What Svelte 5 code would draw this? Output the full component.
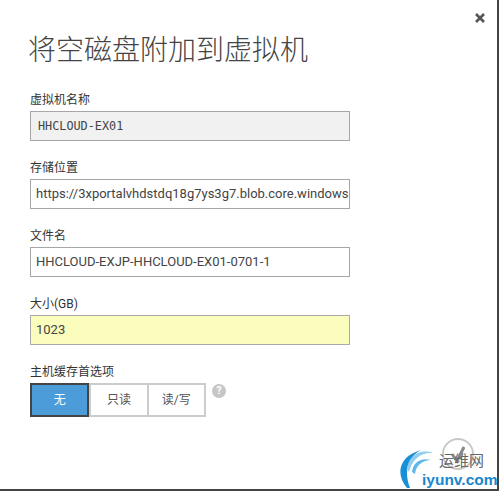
<script>
	const fields = [
		{ label: '虚拟机名称', value: 'HHCLOUD-EX01', kind: 'readonly' },
		{ label: '存储位置', value: 'https://3xportalvhdstdq18g7ys3g7.blob.core.windows', kind: '' },
		{ label: '文件名', value: 'HHCLOUD-EXJP-HHCLOUD-EX01-0701-1', kind: '' },
		{ label: '大小(GB)', value: '1023', kind: 'invalid' }
	];
	const options = ['无', '只读', '读/写'];
	let selected = 0;
</script>

<div class="dialog">
	<button class="close" aria-label="close">
		<svg width="10" height="10" viewBox="0 0 10 10"><path d="M1 1L9 9M9 1L1 9" stroke="#555" stroke-width="2.6" /></svg>
	</button>

	<h1>将空磁盘附加到虚拟机</h1>

	{#each fields as field}
		<div class="field">
			<span class="label">{field.label}</span>
			<div class="input {field.kind}">{field.value}</div>
		</div>
	{/each}

	<div class="field">
		<span class="label">主机缓存首选项</span>
		<div class="option-row">
			<div class="options">
				{#each options as option, i}
					<div class="option" class:selected={i === selected}>{option}</div>
				{/each}
			</div>
			<span class="help">?</span>
		</div>
	</div>

	<div class="confirm">
		<svg width="32" height="32" viewBox="0 0 32 32">
			<circle cx="16" cy="16" r="15" fill="none" stroke="#c8c8c8" stroke-width="2" />
			<path d="M10 16L15 23L22 9" fill="none" stroke="#888" stroke-width="3" />
		</svg>
	</div>

	<div class="watermark">
		<svg viewBox="0 0 34 40">
			<path d="M8 40C-4 26 0 8 22 2C10 8 4 22 11 40Z" fill="#1a8fd8" />
			<path d="M13 24C14 14 22 9 32 12C24 12 17 17 16 26Z" fill="#5cb8ea" />
			<path d="M8 20C10 9 20 0 34 5C22 4 13 11 10 24Z" fill="#8ccdf0" />
		</svg>
		<span class="wm-cn">运维网</span>
		<span class="wm-en">iyunv.com</span>
	</div>
</div>

<style>
	:global(body) {
		margin: 0;
		background: #fff;
	}

	.dialog {
		position: relative;
		box-sizing: border-box;
		width: 499px;
		height: 491px;
		padding: 32px 0 0 30px;
		background: #fff;
		border-right: 2px solid #444;
		border-bottom: 2px solid #444;
		font-family: "Roboto", "Noto Sans CJK SC", sans-serif;
		color: #333;
	}

	.close {
		position: absolute;
		top: 13px;
		right: 12px;
		padding: 0;
		border: 0;
		background: none;
		line-height: 0;
	}

	h1 {
		margin: 0 0 24px -2px;
		font-family: "Noto Sans CJK SC", sans-serif;
		font-size: 28px;
		font-weight: 300;
		line-height: 33px;
		color: #444;
	}

	.field {
		margin-bottom: 16px;
	}

	.label {
		display: block;
		height: 22px;
		font-size: 12px;
		line-height: 22px;
	}

	.input {
		box-sizing: border-box;
		width: 320px;
		height: 30px;
		padding: 0 5px;
		overflow: hidden;
		border: 1px solid #a6a6a6;
		font-size: 13px;
		line-height: 28px;
		white-space: nowrap;
		color: #444;
	}

	.readonly {
		padding-left: 7px;
		background: #f1f1f1;
		font-family: "DejaVu Sans Mono", monospace;
		font-size: 11.8px;
	}

	.invalid {
		background: #fbfdbc;
		border-color: #aaa;
	}

	.option-row {
		display: flex;
		align-items: flex-start;
		gap: 6px;
	}

	.options {
		display: flex;
		height: 34px;
		border: 2px solid #ccc;
		box-sizing: border-box;
		width: 176px;
	}

	.option {
		flex: 1;
		box-sizing: border-box;
		font-size: 12px;
		line-height: 30px;
		text-align: center;
		color: #555;
		border-left: 2px solid #ccc;
	}

	.option:first-child {
		border-left: 0;
	}

	.option.selected {
		margin: -2px 0 -2px -2px;
		height: 34px;
		line-height: 30px;
		border: 2px solid #444;
		background: #4b9cd8;
		color: #fff;
	}

	.help {
		width: 14px;
		height: 14px;
		margin-top: 1px;
		border-radius: 50%;
		background: #c6c6c6;
		color: #fff;
		font-size: 11px;
		font-weight: 700;
		line-height: 14px;
		text-align: center;
	}

	.confirm {
		position: absolute;
		left: 442px;
		top: 438px;
		line-height: 0;
	}

	.watermark {
		position: absolute;
		left: 399px;
		top: 448px;
		width: 98px;
		height: 40px;
	}

	.watermark svg {
		position: absolute;
		left: 0;
		top: 0;
		width: 34px;
		height: 40px;
	}

	.wm-cn {
		position: absolute;
		left: 40px;
		top: 4px;
		font-size: 15px;
		line-height: 18px;
		color: #666;
		white-space: nowrap;
	}

	.wm-en {
		position: absolute;
		left: 23px;
		top: 23px;
		font-family: "Liberation Sans", sans-serif;
		font-size: 15.5px;
		font-weight: 700;
		line-height: 18px;
		color: #1a86cc;
		white-space: nowrap;
	}
</style>
